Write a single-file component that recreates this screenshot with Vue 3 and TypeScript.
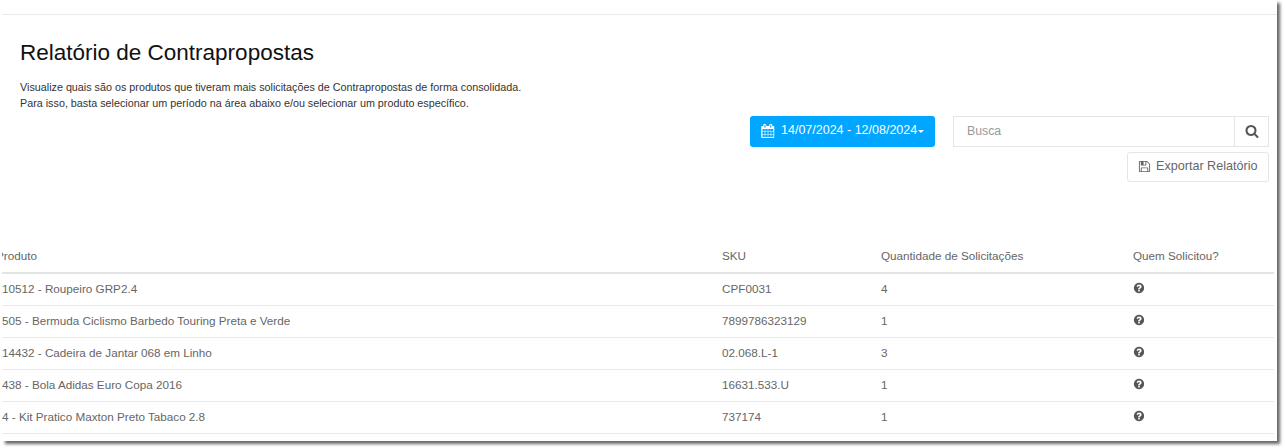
<script setup lang="ts">
interface Row {
  produto: string
  sku: string
  qtd: number
}

const rows: Row[] = [
  { produto: '10512 - Roupeiro GRP2.4', sku: 'CPF0031', qtd: 4 },
  { produto: '505 - Bermuda Ciclismo Barbedo Touring Preta e Verde', sku: '7899786323129', qtd: 1 },
  { produto: '14432 - Cadeira de Jantar 068 em Linho', sku: '02.068.L-1', qtd: 3 },
  { produto: '438 - Bola Adidas Euro Copa 2016', sku: '16631.533.U', qtd: 1 },
  { produto: '4 - Kit Pratico Maxton Preto Tabaco 2.8', sku: '737174', qtd: 1 },
]
</script>

<template>
  <div class="frame">
    <hr class="top-line" />

    <header class="intro">
      <h1 class="intro__title">Relatório de Contrapropostas</h1>
      <p class="intro__text">
        Visualize quais são os produtos que tiveram mais solicitações de Contrapropostas de forma consolidada.<br />
        Para isso, basta selecionar um período na área abaixo e/ou selecionar um produto específico.
      </p>
    </header>

    <div class="tools">
      <div class="tools__row">
        <button class="date-btn" type="button">
          <svg class="date-btn__icon" viewBox="0 0 1792 1792" fill="currentColor">
            <path d="M192 1664h288v-288h-288v288zm352 0h320v-288h-320v288zm-352-352h288v-320h-288v320zm352 0h320v-320h-320v320zm-352-384h288v-288h-288v288zm736 736h320v-288h-320v288zm-384-736h320v-288h-320v288zm768 736h288v-288h-288v288zm-384-352h320v-320h-320v320zm-352-864v-288q0-13-9.5-22.5t-22.5-9.5h-64q-13 0-22.5 9.5t-9.5 22.5v288q0 13 9.5 22.5t22.5 9.5h64q13 0 22.5-9.5t9.5-22.5zm736 864h288v-320h-288v320zm-384-384h320v-288h-320v288zm352 0h288v-288h-288v288zm32-480v-288q0-13-9.5-22.5t-22.5-9.5h-64q-13 0-22.5 9.5t-9.5 22.5v288q0 13 9.5 22.5t22.5 9.5h64q13 0 22.5-9.5t9.5-22.5zm384-64v1280q0 52-38 90t-90 38h-1408q-52 0-90-38t-38-90v-1280q0-52 38-90t90-38h128v-96q0-66 47-113t113-47h64q66 0 113 47t47 113v96h384v-96q0-66 47-113t113-47h64q66 0 113 47t47 113v96h128q52 0 90 38t38 90z" />
          </svg>
          <span>14/07/2024 - 12/08/2024</span>
          <span class="date-btn__caret" />
        </button>
        <div class="search">
          <input class="search__input" type="text" placeholder="Busca" />
          <span class="search__btn">
            <svg class="search__icon" viewBox="0 0 1792 1792" fill="currentColor">
              <path d="M1216 832q0-185-131.5-316.5t-316.5-131.5-316.5 131.5-131.5 316.5 131.5 316.5 316.5 131.5 316.5-131.5 131.5-316.5zm512 832q0 52-38 90t-90 38q-54 0-90-38l-343-342q-179 124-399 124-143 0-273.5-55.5t-225-150-150-225-55.5-273.5 55.5-273.5 150-225 225-150 273.5-55.5 273.5 55.5 225 150 150 225 55.5 273.5q0 220-124 399l343 343q37 37 37 90z" />
            </svg>
          </span>
        </div>
      </div>
      <button class="export-btn" type="button">
        <svg class="export-btn__icon" viewBox="0 0 1792 1792" fill="currentColor">
          <path d="M512 1536h768v-384h-768v384zm896 0h128v-896q0-14-10-38.5t-20-34.5l-281-281q-10-10-34-20t-39-10v416q0 40-28 68t-68 28h-576q-40 0-68-28t-28-68v-416h-128v1280h128v-416q0-40 28-68t68-28h832q40 0 68 28t28 68v416zm-384-928v-320q0-13-9.5-22.5t-22.5-9.5h-192q-13 0-22.5 9.5t-9.5 22.5v320q0 13 9.5 22.5t22.5 9.5h192q13 0 22.5-9.5t9.5-22.5zm640 32v928q0 40-28 68t-68 28h-1344q-40 0-68-28t-28-68v-1344q0-40 28-68t68-28h928q40 0 88 20t76 48l280 280q28 28 48 76t20 88z" />
        </svg>
        Exportar Relatório
      </button>
    </div>

    <table class="report">
      <colgroup>
        <col class="report__col-prod" />
        <col class="report__col-sku" />
        <col class="report__col-qtd" />
        <col />
      </colgroup>
      <thead>
        <tr>
          <th class="report__first-head">Produto</th>
          <th>SKU</th>
          <th>Quantidade de Solicitações</th>
          <th>Quem Solicitou?</th>
        </tr>
      </thead>
      <tbody>
        <tr v-for="row in rows" :key="row.sku">
          <td>{{ row.produto }}</td>
          <td>{{ row.sku }}</td>
          <td>{{ row.qtd }}</td>
          <td>
            <svg class="report__help" viewBox="0 0 1792 1792" fill="currentColor">
              <path d="M1024 1376v-192q0-14-9-23t-23-9h-192q-14 0-23 9t-9 23v192q0 14 9 23t23 9h192q14 0 23-9t9-23zm256-672q0-88-55.5-163t-138.5-116-170-41q-243 0-371 213-15 24 8 42l132 100q7 6 19 6 16 0 25-12 53-68 86-92 34-24 86-24 48 0 85.5 26t37.5 59q0 38-20 61t-68 45q-63 28-115.5 86.5t-52.5 125.5v36q0 14 9 23t23 9h192q14 0 23-9t9-23q0-19 21.5-49.5t54.5-49.5q32-18 49-28.5t46-35 44.5-48 28-60.5 12.5-81zm384 192q0 209-103 385.5t-279.5 279.5-385.5 103-385.5-103-279.5-279.5-103-385.5 103-385.5 279.5-279.5 385.5-103 385.5 103 279.5 279.5 103 385.5z" />
            </svg>
          </td>
        </tr>
      </tbody>
    </table>
  </div>
</template>

<style>
html,
body {
  background: #fff;
}
body {
  min-height: 448px;
}
</style>

<style scoped>
.frame {
  box-sizing: border-box;
  width: 1275px;
  height: 441px;
  margin-left: 2px;
  padding-top: 14px;
  overflow: hidden;
  background: #fff;
  box-shadow: 3px 3px 3px rgba(0, 0, 0, 0.6);
  font-family: 'Liberation Sans', Arial, sans-serif;
}
.top-line {
  height: 1px;
  margin: 0;
  border: 0;
  background: #eaeaea;
}
.intro {
  padding: 0 0 0 18px;
}
.intro__title {
  margin: 24px 0 0;
  font-size: 22.5px;
  line-height: 28px;
  font-weight: 400;
  color: #111;
}
.intro__text {
  margin: 12px 0 0;
  font-size: 10.78px;
  line-height: 16px;
  color: #333;
}
.tools {
  display: flex;
  flex-direction: column;
  align-items: flex-end;
  gap: 5px;
  margin-top: 5px;
  padding-right: 8px;
}
.tools__row {
  display: flex;
  gap: 18px;
}
.date-btn {
  display: flex;
  align-items: center;
  width: 185px;
  height: 31px;
  padding: 0 0 4px 11px;
  border: 0;
  border-radius: 3px;
  background: #00a6ff;
  color: #fff;
  font: 400 12.5px 'Liberation Sans', Arial, sans-serif;
}
.date-btn__icon {
  width: 14px;
  height: 14px;
  margin: 2px 6px 0 0;
}
.date-btn__caret {
  width: 0;
  height: 0;
  margin-top: 3px;
  margin-left: 1px;
  border-top: 3px solid #fff;
  border-left: 3px solid transparent;
  border-right: 3px solid transparent;
}
.search {
  display: flex;
  width: 316px;
  height: 31px;
}
.search__input {
  box-sizing: border-box;
  flex: 1;
  min-width: 0;
  height: 100%;
  padding: 0 13px 2px;
  border: 1px solid #e5e5e5;
  border-right: 0;
  outline: none;
  font: 400 12.3px 'Liberation Sans', Arial, sans-serif;
  color: #555;
}
.search__input::placeholder {
  color: #999;
  opacity: 1;
}
.search__btn {
  box-sizing: border-box;
  display: flex;
  align-items: center;
  justify-content: center;
  width: 35px;
  padding-bottom: 2px;
  border: 1px solid #e5e5e5;
  color: #555;
}
.search__icon {
  width: 14px;
  height: 14px;
}
.export-btn {
  display: flex;
  align-items: center;
  box-sizing: border-box;
  width: 142px;
  height: 30px;
  padding: 0 0 2px 10px;
  border: 1px solid #e5e5e5;
  border-radius: 3px;
  background: #fff;
  color: #666;
  font: 400 12.6px 'Liberation Sans', Arial, sans-serif;
}
.export-btn__icon {
  width: 13px;
  height: 13px;
  margin-right: 5px;
}
.report {
  width: 1272px;
  margin-top: 63px;
  border-collapse: collapse;
  table-layout: fixed;
  font-size: 11.7px;
  color: #666;
}
.report__col-prod {
  width: 712px;
}
.report__col-sku {
  width: 159px;
}
.report__col-qtd {
  width: 252px;
}
.report th {
  height: 20px;
  padding: 0 8px 7px;
  border-bottom: 2px solid #e4e4e4;
  text-align: left;
  font-weight: 400;
  color: #666;
}
.report td {
  height: 28px;
  padding: 0 8px 3px;
  border-bottom: 1px solid #e9e9e9;
}
.report th:first-child,
.report td:first-child {
  padding-left: 0;
}
.report__first-head {
  text-indent: -6px;
}
.report__help {
  display: block;
  width: 12px;
  height: 12px;
  color: #555;
}
</style>
